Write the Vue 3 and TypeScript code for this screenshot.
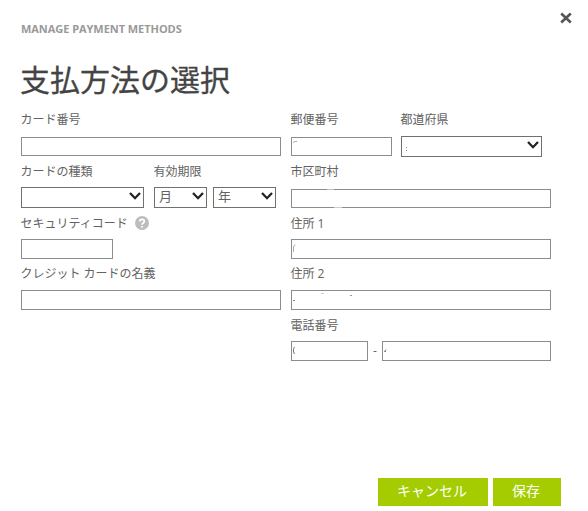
<script setup lang="ts">
interface Mark { d: string; color: string }
interface Control {
  name: string
  kind: 'input' | 'select'
  width: number
  height: number
  text?: string
  marks?: Mark[]
}
interface Field { label: string; size: number; help?: boolean; drop?: boolean; controls: Control[] }

const leftFields: Field[][] = [
  [{ label: 'カード番号', size: 260, controls: [{ name: 'number', kind: 'input', width: 260, height: 19 }] }],
  [
    { label: 'カードの種類', size: 123, controls: [{ name: 'type', kind: 'select', width: 123, height: 21 }] },
    {
      label: '有効期限', size: 122, controls: [
        { name: 'month', kind: 'select', width: 53, height: 21, text: '月' },
        { name: 'year', kind: 'select', width: 63, height: 21, text: '年' },
      ],
    },
  ],
  [{ label: 'セキュリティコード', size: 260, help: true, controls: [{ name: 'code', kind: 'input', width: 92, height: 20 }] }],
  [{ label: 'クレジット カードの名義', size: 260, controls: [{ name: 'holder', kind: 'input', width: 260, height: 20 }] }],
]

const rightFields: Field[][] = [
  [
    { label: '郵便番号', size: 101, controls: [{ name: 'zip', kind: 'input', width: 101, height: 19, marks: [{ d: 'M2 5.5L4 4.5H6', color: '#aaa' }] }] },
    { label: '都道府県', size: 141, controls: [{ name: 'prefecture', kind: 'select', width: 141, height: 21, marks: [{ d: 'M5 11.5H6M5 14.5H6', color: '#888' }] }] },
  ],
  [{
    label: '市区町村', size: 260, drop: true, controls: [{
      name: 'city', kind: 'input', width: 260, height: 19,
      marks: [{ d: 'M36 .5H43', color: '#c0c0c0' }, { d: 'M43 18.5H51', color: '#ccc' }],
    }],
  }],
  [{ label: '住所 1', size: 260, controls: [{ name: 'address1', kind: 'input', width: 260, height: 20, marks: [{ d: 'M2.5 13V8L4 5.5', color: '#aaa' }] }] }],
  [{
    label: '住所 2', size: 260, controls: [{
      name: 'address2', kind: 'input', width: 260, height: 20,
      marks: [{ d: 'M2 10.5H4', color: '#777' }, { d: 'M30 3.5H33', color: '#ccc' }, { d: 'M59 5.5H61', color: '#999' }],
    }],
  }],
  [{
    label: '電話番号', size: 260, controls: [
      { name: 'area', kind: 'input', width: 77, height: 20, marks: [{ d: 'M3.5 6L2.5 8V11L3.5 13', color: '#777' }] },
      { name: 'phone', kind: 'input', width: 169, height: 20, marks: [{ d: 'M4 8.5L2.5 10.5H4', color: '#777' }] },
    ],
  }],
]
const columns = [leftFields, rightFields]
</script>

<template>
  <main class="dialog">
    <header class="top">
      <p class="eyebrow">MANAGE PAYMENT METHODS</p>
      <button class="close" aria-label="閉じる">
        <svg width="12" height="12" viewBox="0 0 12 12"><path d="M1.2 1.5L10.8 10.5M10.8 1.5L1.2 10.5" /></svg>
      </button>
    </header>
    <h1>支払方法の選択</h1>
    <form class="columns" @submit.prevent>
      <section v-for="(rows, c) in columns" :key="c" class="column">
        <div v-for="(row, r) in rows" :key="r" class="row" :class="`row-${r + 1}`">
          <div v-for="field in row" :key="field.label" class="field" :style="{ width: field.size + 'px' }">
            <div class="label">
              <span>{{ field.label }}</span>
              <svg v-if="field.help" class="help" width="14" height="14" viewBox="0 0 14 14">
                <circle cx="7" cy="7" r="7" />
                <path d="M4.8 5.4C4.8 2.5 9.3 2.7 9.3 5.3C9.3 7 7 6.8 7 8.7M7 10V11.4" />
              </svg>
            </div>
            <div class="controls" :class="{ drop: field.drop }">
              <template v-for="control in field.controls" :key="control.name">
                <span v-if="control.name === 'phone'" class="dash">-</span>
                <span class="control" :class="control.kind" :style="{ width: control.width + 'px', height: control.height + 'px' }">
                  <input v-if="control.kind === 'input'" type="text" :aria-label="field.label">
                  <template v-else>
                    <select :aria-label="field.label"><option>{{ control.text }}</option></select>
                    <svg class="chevron" width="12" height="8" viewBox="0 0 12 8"><path d="M1 1L6 6.2L11 1" /></svg>
                  </template>
                  <svg v-if="control.marks" class="marks" :width="control.width" :height="control.height">
                    <path v-for="mark in control.marks" :key="mark.d" :d="mark.d" :stroke="mark.color" />
                  </svg>
                </span>
              </template>
            </div>
          </div>
        </div>
      </section>
    </form>
    <footer>
      <button class="action cancel">キャンセル</button>
      <button class="action save">保存</button>
    </footer>
  </main>
</template>

<style>
body { margin: 0; background: #fff; }
</style>

<style scoped>
* { box-sizing: border-box; }
.dialog {
  width: 588px;
  height: 511px;
  display: flex;
  flex-direction: column;
  padding: 0 27px 5px 21px;
  overflow: hidden;
  font-family: "Open Sans", "Noto Sans CJK JP", sans-serif;
  font-size: 12px;
  color: #626262;
}
.top { display: flex; justify-content: space-between; height: 58px; flex: none; margin-right: -11px; }
.eyebrow { margin: 21px 0 0; font: bold 11px/16px "Open Sans", sans-serif; letter-spacing: -.05px; color: #999; white-space: nowrap; }
button { border: 0; padding: 0; font-family: inherit; }
.close { width: 12px; height: 12px; margin-top: 12px; background: none; }
.close svg { display: block; }
.close path { fill: none; stroke: #555; stroke-width: 2.6; }
h1 { flex: none; margin: 0 0 0 -1px; height: 50px; line-height: 44px; font-size: 30px; font-weight: 400; color: #444; -webkit-text-stroke: .3px #444; white-space: nowrap; }
.columns { display: flex; gap: 10px; flex: none; }
.column { width: 260px; }
.row { display: flex; height: 51px; }
.field { flex: none; margin-right: 10px; }
.row-1 .field:first-child { margin-right: 9px; }
.label { display: flex; align-items: center; gap: 7px; height: 24px; margin: 0 0 5px -.5px; line-height: 24px; white-space: pre; }
.row-2 .label, .row-4 .label { height: 26px; margin-bottom: 3px; }
.row-3 .label, .row-5 .label { height: 27px; margin-bottom: 2px; }
.help { display: block; margin-top: -1px; }
.help circle { fill: #bdbdbd; }
.help path { fill: none; stroke: #fff; stroke-width: 1.8; }
.controls { display: flex; gap: 6px; }
.row-5 .controls { gap: 0; }
.controls.drop { margin-top: 4px; }
.control { position: relative; flex: none; display: block; }
.control.select { margin-top: -1px; }
input, select {
  display: block;
  width: 100%;
  height: 100%;
  margin: 0;
  padding: 0 4px;
  border: 1px solid #8c8c8c;
  border-radius: 0;
  outline: none;
  appearance: none;
  background: #fff;
  color: #626262;
  font: 12px/18px "Noto Sans CJK JP", sans-serif;
}
select { padding-bottom: 3px; border-color: #707070; font-size: 13px; line-height: 16px; }
.chevron { position: absolute; top: 5px; right: 3px; }
.chevron path { fill: none; stroke: #222; stroke-width: 2.3; }
.marks { position: absolute; top: 0; left: 0; pointer-events: none; }
.marks path { fill: none; stroke-width: 1; }
.dash { width: 14px; text-align: center; line-height: 19px; }
footer { display: flex; justify-content: flex-end; gap: 5px; margin-top: auto; }
.action { height: 28px; padding: 0 2px 2px 0; background: #a4cc00; color: #fff; font-size: 14px; line-height: 26px; }
.cancel { width: 110px; }
.save { width: 68px; }
</style>
